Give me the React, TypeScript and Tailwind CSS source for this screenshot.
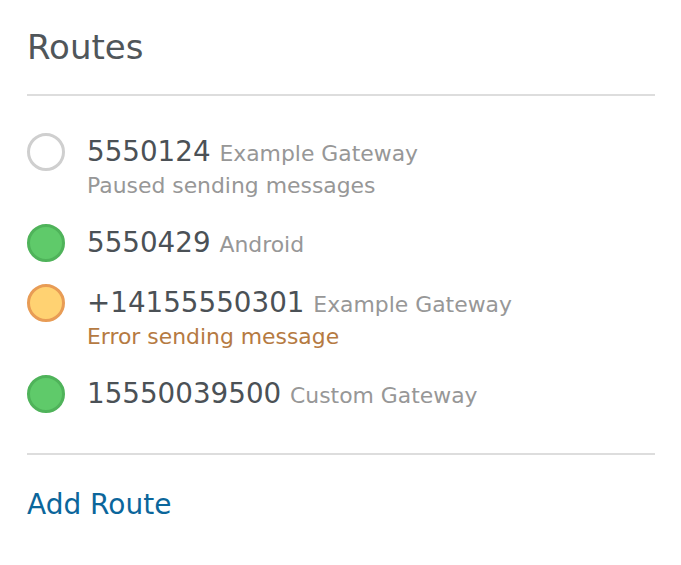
import React from 'react';

type Status = 'paused' | 'ok' | 'error';

interface Route {
  number: string;
  gateway: string;
  status: Status;
  note?: string;
}

const routes: Route[] = [
  { number: '5550124', gateway: 'Example Gateway', status: 'paused', note: 'Paused sending messages' },
  { number: '5550429', gateway: 'Android', status: 'ok' },
  { number: '+14155550301', gateway: 'Example Gateway', status: 'error', note: 'Error sending message' },
  { number: '15550039500', gateway: 'Custom Gateway', status: 'ok' },
];

const dotClasses: Record<Status, string> = {
  paused: 'bg-white border-[#cfcfcf]',
  ok: 'bg-[#5fca6a] border-[#4fb35a]',
  error: 'bg-[#ffd272] border-[#e89c55]',
};

const noteClasses: Record<Status, string> = {
  paused: 'text-[#979797]',
  ok: 'text-[#979797]',
  error: 'text-[#b57a42]',
};

const RouteRow: React.FC<{ route: Route }> = ({ route }) => (
  <li className="flex items-start gap-[22px]">
    <span className={`w-[38px] h-[38px] rounded-full border-[3px] shrink-0 ${dotClasses[route.status]}`} />
    <div className="flex flex-col">
      <div className="h-[38px] text-[27.75px] leading-[38px] text-[#4b5156] whitespace-nowrap">
        {route.number}{' '}
        <span className="text-[21.9px] text-[#979797]">{route.gateway}</span>
      </div>
      {route.note && (
        <div className={`h-[30px] text-[21.9px] leading-[30px] ${noteClasses[route.status]}`}>{route.note}</div>
      )}
    </div>
  </li>
);

export default function App() {
  return (
    <div className="w-[681px] h-[565px] bg-white pt-[27px] pl-[27px] pr-[26px] font-['DejaVu_Sans',sans-serif]">
      <h2 className="text-[34px] leading-[40px] text-[#50565a]">Routes</h2>
      <div className="mt-[27px] h-[2px] bg-[#dddddd]" />
      <ul className="flex flex-col gap-[22.5px] pt-[37px] pb-[40px]">
        {routes.map((r) => (
          <RouteRow key={r.number} route={r} />
        ))}
      </ul>
      <div className="h-[2px] bg-[#dddddd]" />
      <a href="#" className="block mt-[31px] text-[28px] leading-[38px] text-[#0b669b]">
        Add Route
      </a>
    </div>
  );
}
